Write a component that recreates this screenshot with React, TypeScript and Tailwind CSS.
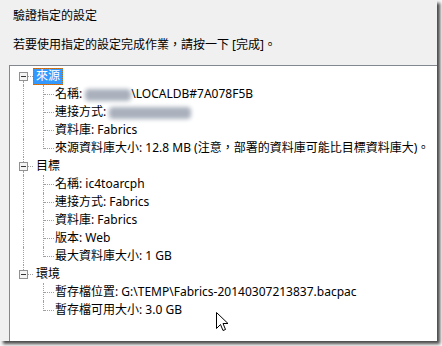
import React from "react";

type Child = { key: string; node: React.ReactNode };

function Blur({ w }: { w: number }) {
  return (
    <span
      className="inline-block h-[12px] rounded-sm bg-[#aab1bd] blur-[2px] align-middle"
      style={{ width: w }}
    />
  );
}

function Expander() {
  return (
    <svg width="9" height="9" viewBox="0 0 9 9" className="absolute left-[9px] top-[5px]">
      <rect x="0.5" y="0.5" width="8" height="8" fill="#f4f4f4" stroke="#919191" />
      <line x1="2" y1="4.5" x2="7" y2="4.5" stroke="#333" />
    </svg>
  );
}

const groups: { label: string; selected?: boolean; children: Child[] }[] = [
  {
    label: "來源",
    selected: true,
    children: [
      {
        key: "n",
        node: (
          <>
            名稱: <Blur w={46} />
            \LOCALDB#7A078F5B
          </>
        ),
      },
      {
        key: "c",
        node: (
          <>
            連接方式: <Blur w={82} />
          </>
        ),
      },
      { key: "d", node: "資料庫: Fabrics" },
      { key: "s", node: "來源資料庫大小: 12.8 MB (注意，部署的資料庫可能比目標資料庫大)。" },
    ],
  },
  {
    label: "目標",
    children: [
      { key: "n", node: "名稱: ic4toarcph" },
      { key: "c", node: "連接方式: Fabrics" },
      { key: "d", node: "資料庫: Fabrics" },
      { key: "v", node: "版本: Web" },
      { key: "m", node: "最大資料庫大小: 1 GB" },
    ],
  },
  {
    label: "環境",
    children: [
      { key: "p", node: "暫存檔位置: G:\\TEMP\\Fabrics-20140307213837.bacpac" },
      { key: "f", node: "暫存檔可用大小: 3.0 GB" },
    ],
  },
];

const dot = "border-dotted border-[#a0a0a0]";

export default function App() {
  return (
    <div
      className="w-[442px] h-[346px] bg-[#f7f7f7] overflow-hidden text-[12px] text-black"
      style={{ fontFamily: '"Segoe UI", "Noto Sans", "Noto Sans CJK TC", sans-serif' }}
    >
      <div className="relative w-[437px] h-[341px] bg-[#f0f0f0] flex flex-col shadow-[3px_3px_3px_rgba(0,0,0,0.7)]">
        <div className="h-[20px] mt-[6px] ml-[13px] flex items-center">驗證指定的設定</div>
        <div className="h-[20px] mt-[9px] ml-[13px] flex items-center">若要使用指定的設定完成作業，請按一下 [完成]。</div>
        <div className="mt-[10px] ml-[9px] flex-1 bg-white border-l border-t border-[#828790] pt-[1px]">
          {groups.map((g, gi) => {
            const lastGroup = gi === groups.length - 1;
            return (
              <div key={g.label}>
                <div className="flex h-[18px] items-center">
                  <div className="relative w-[23px] h-full shrink-0">
                    {gi > 0 && <div className={`absolute left-[13px] top-0 h-[5px] border-l ${dot}`} />}
                    {!lastGroup && <div className={`absolute left-[13px] top-[14px] bottom-0 border-l ${dot}`} />}
                    <Expander />
                    <div className={`absolute left-[18px] right-0 top-[9px] border-t ${dot}`} />
                  </div>
                  <span
                    className={
                      g.selected
                        ? "h-[17px] px-[2px] flex items-center bg-[#3399ff] text-white border border-dotted border-[#c76a10]"
                        : "h-[17px] px-[2px] flex items-center border border-transparent"
                    }
                  >
                    {g.label}
                  </span>
                </div>
                {g.children.map((c, ci) => {
                  const lastChild = ci === g.children.length - 1;
                  return (
                    <div key={c.key} className="flex h-[18px] items-center">
                      <div className="relative w-[23px] h-full shrink-0">
                        {!lastGroup && <div className={`absolute left-[13px] top-0 bottom-0 border-l ${dot}`} />}
                      </div>
                      <div className="relative w-[22px] h-full shrink-0">
                        <div
                          className={`absolute left-[10px] top-0 border-l ${dot} ${lastChild ? "h-[10px]" : "bottom-0"}`}
                        />
                        <div className={`absolute left-[11px] right-[1px] top-[9px] border-t ${dot}`} />
                      </div>
                      <span className="whitespace-nowrap">{c.node}</span>
                    </div>
                  );
                })}
              </div>
            );
          })}
        </div>
        <svg width="13" height="20" viewBox="0 0 13 20" className="absolute left-[216px] top-[312px]">
          <polygon
            points="0.5,0.5 0.5,16.5 4.5,12.5 7,18.5 9.5,17.5 7,11.5 12,11.5"
            fill="#fff"
            stroke="#000"
            strokeLinejoin="miter"
          />
        </svg>
      </div>
    </div>
  );
}
